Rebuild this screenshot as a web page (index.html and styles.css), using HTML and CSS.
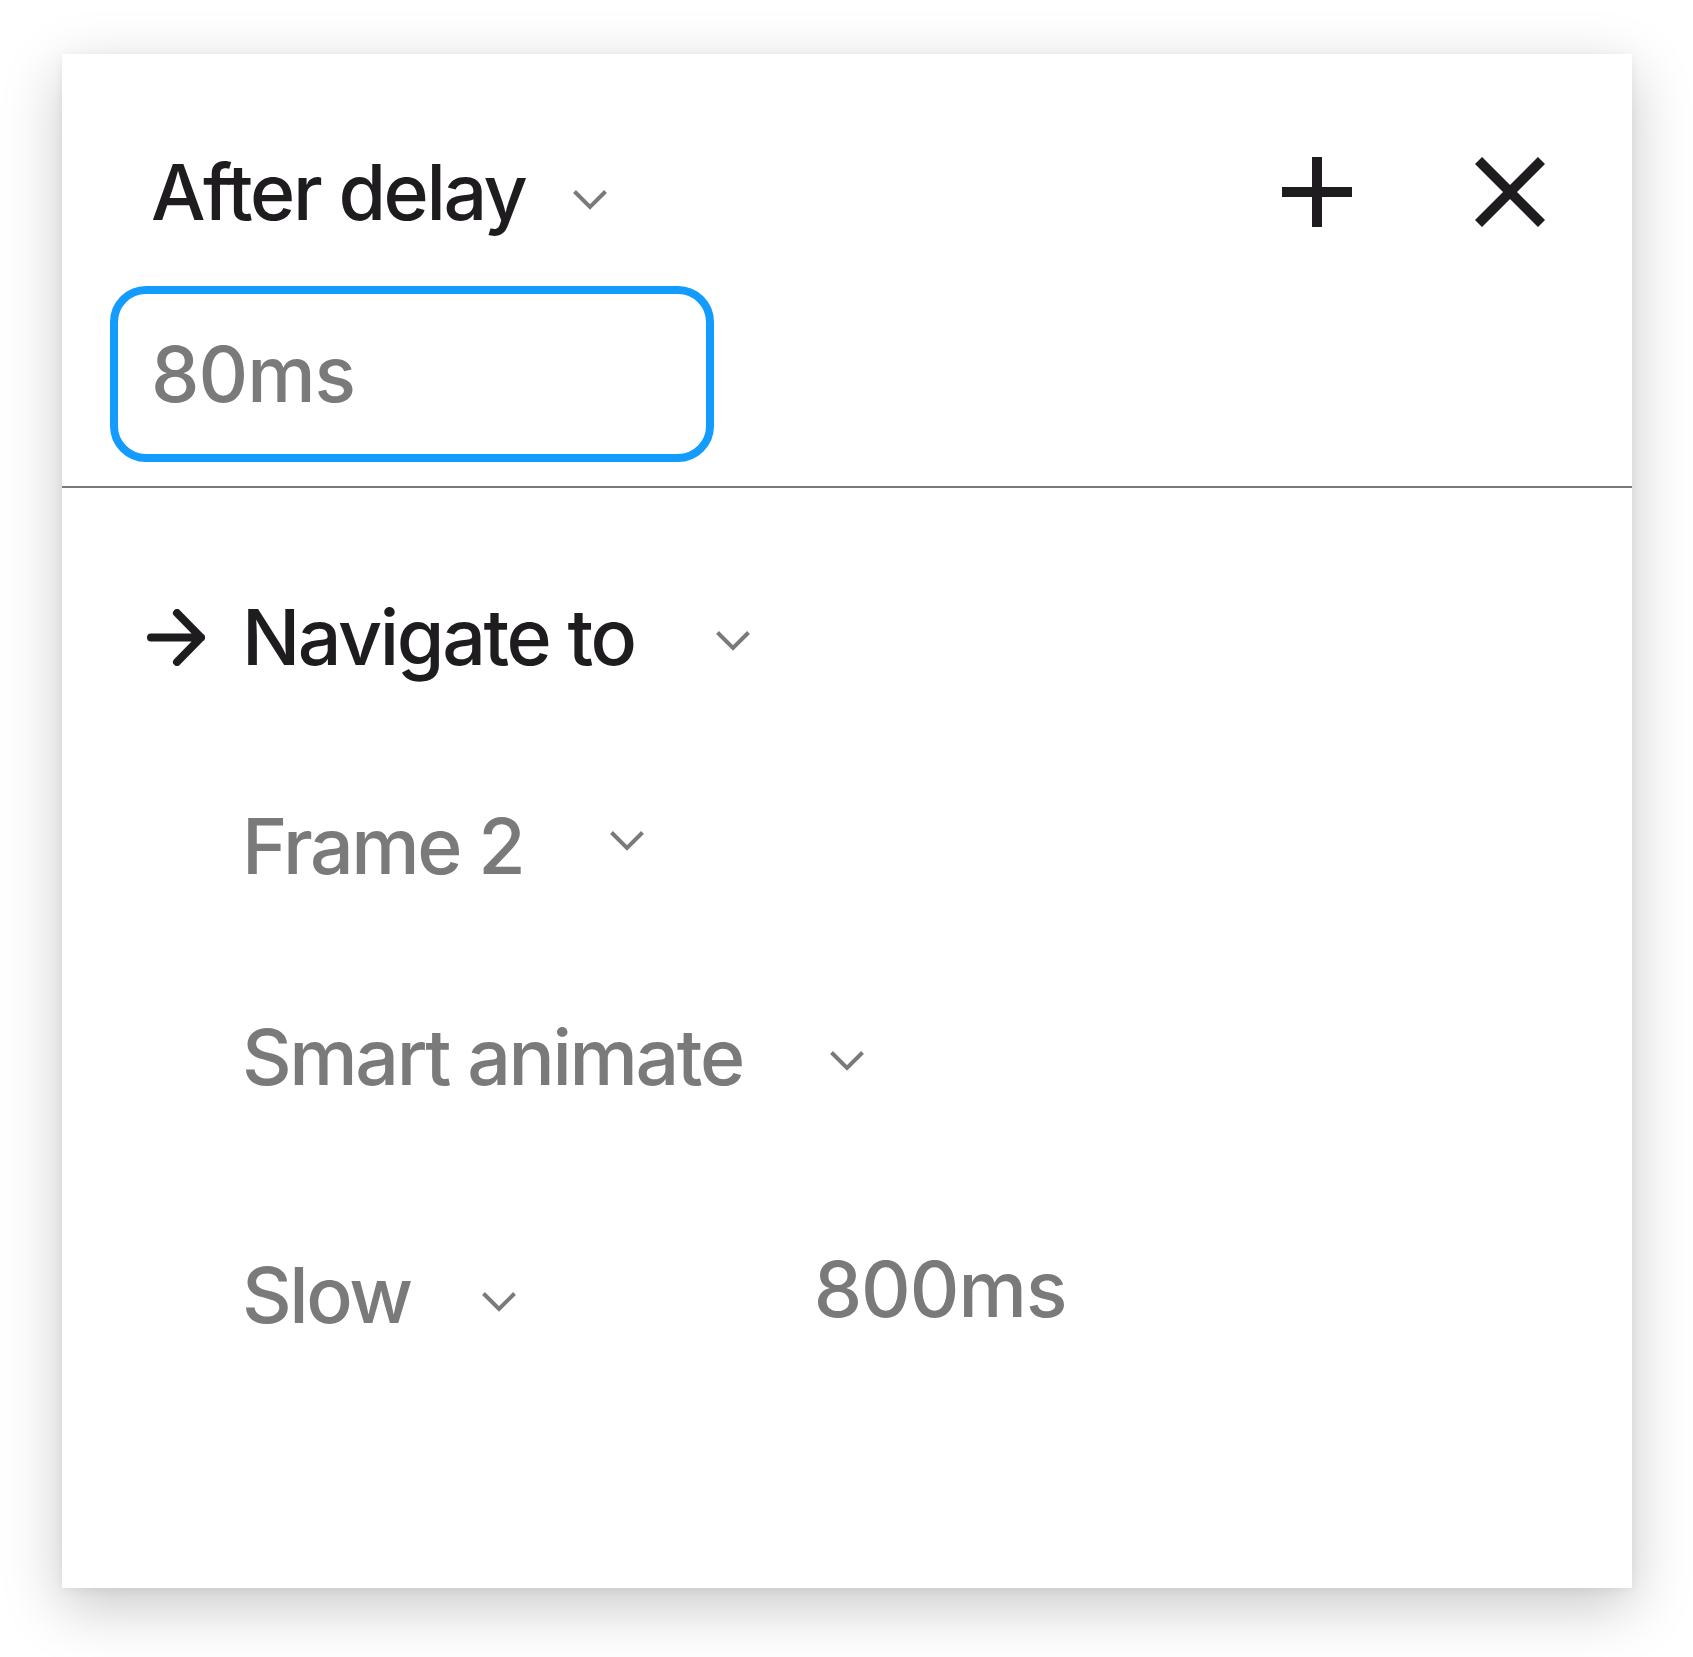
FILE: index.html
```html
<!DOCTYPE html>
<html lang="en">
<head>
<meta charset="utf-8">
<title>Interaction</title>
<link rel="stylesheet" href="styles.css">
</head>
<body>
<div class="panel">
  <section class="trigger">
    <div class="header">
      <div class="dropdown dropdown--tight">
        <span class="label label--dark">After delay</span>
        <svg class="chevron chevron--low" viewBox="0 0 34 21" aria-hidden="true"><polyline points="1.5,1.5 17,17 32.5,1.5"/></svg>
      </div>
      <div class="actions">
        <svg class="icon-btn" viewBox="0 0 70 70" aria-hidden="true"><path d="M35 0V70M0 35H70"/></svg>
        <svg class="icon-btn" viewBox="0 0 70 70" aria-hidden="true"><path d="M3.5 3.5L66.5 66.5M66.5 3.5L3.5 66.5"/></svg>
      </div>
    </div>
    <div class="field">
      <span class="label label--muted label--num">80ms</span>
    </div>
  </section>
  <section class="action">
    <div class="row row--nav">
      <svg class="arrow" viewBox="0 0 58 57" aria-hidden="true"><path d="M4 28.5H54M30 4L54 28.5L30 53"/></svg>
      <div class="dropdown dropdown--nav">
        <span class="label label--dark">Navigate to</span>
        <svg class="chevron" viewBox="0 0 34 21" aria-hidden="true"><polyline points="1.5,1.5 17,17 32.5,1.5"/></svg>
      </div>
    </div>
    <div class="row row--frame">
      <div class="dropdown">
        <span class="label label--muted">Frame 2</span>
        <svg class="chevron chevron--up" viewBox="0 0 34 21" aria-hidden="true"><polyline points="1.5,1.5 17,17 32.5,1.5"/></svg>
      </div>
    </div>
    <div class="row row--anim">
      <div class="dropdown">
        <span class="label label--muted">Smart animate</span>
        <svg class="chevron" viewBox="0 0 34 21" aria-hidden="true"><polyline points="1.5,1.5 17,17 32.5,1.5"/></svg>
      </div>
    </div>
    <div class="row row--timing">
      <div class="dropdown dropdown--slow">
        <span class="label label--muted">Slow</span>
        <svg class="chevron chevron--down" viewBox="0 0 34 21" aria-hidden="true"><polyline points="1.5,1.5 17,17 32.5,1.5"/></svg>
      </div>
      <span class="label label--muted label--num duration">800ms</span>
    </div>
  </section>
</div>
</body>
</html>
```

FILE: styles.css
```css
html, body {
  margin: 0;
  padding: 0;
  background: #ffffff;
}

body {
  font-family: "Inter", "Noto Sans", "Liberation Sans", sans-serif;
  padding-bottom: 69px;
}

.panel {
  box-sizing: border-box;
  margin: 54px 0 0 62px;
  width: 1570px;
  height: 1534px;
  background: #ffffff;
  box-shadow: 0 18px 56px rgba(0, 0, 0, 0.22), 0 2px 10px rgba(0, 0, 0, 0.05);
}

.label {
  font-size: 77px;
  font-weight: 500;
  line-height: 78px;
  letter-spacing: -2.4px;
  white-space: nowrap;
}

.label--num {
  letter-spacing: -1px;
}

.label--dark {
  color: #1e1c1f;
}

.label--muted {
  color: #7a7a7a;
}

.trigger {
  padding: 99px 87px 24px 48px;
  border-bottom: 2px solid #7a7a7a;
}

.header {
  display: flex;
  align-items: center;
  justify-content: space-between;
  padding-left: 41px;
}

.dropdown {
  display: flex;
  align-items: center;
  gap: 87px;
}

.dropdown--tight {
  gap: 48px;
}

.dropdown--nav {
  gap: 81px;
}

.dropdown--slow {
  gap: 71px;
}

.chevron {
  width: 34px;
  height: 21px;
  margin-top: 8px;
  fill: none;
  stroke: #7a7a7a;
  stroke-width: 4;
}

.chevron--low {
  margin-top: 16px;
}

.chevron--up {
  margin-top: -9px;
}

.chevron--down {
  margin-top: 14px;
}

.actions {
  display: flex;
  align-items: center;
  gap: 123px;
}

.icon-btn {
  width: 70px;
  height: 70px;
  fill: none;
  stroke: #1e1c1f;
  stroke-width: 10;
}

.field {
  box-sizing: border-box;
  margin-top: 55px;
  width: 604px;
  height: 176px;
  border: 8px solid #139bfd;
  border-radius: 36px;
  padding-left: 33px;
  display: flex;
  align-items: center;
}

.action {
  padding: 110px 0 0 85px;
}

.row {
  display: flex;
  align-items: center;
}

.row--nav {
  gap: 37px;
}

.row--frame {
  padding-left: 95px;
  margin-top: 131px;
}

.row--anim {
  padding-left: 95px;
  margin-top: 133px;
}

.row--timing {
  padding-left: 95px;
  margin-top: 154px;
}

.arrow {
  width: 58px;
  height: 57px;
  fill: none;
  stroke: #1e1c1f;
  stroke-width: 8;
  stroke-linecap: round;
  stroke-linejoin: round;
}

.duration {
  margin-left: 298px;
  margin-bottom: 12px;
}
```
